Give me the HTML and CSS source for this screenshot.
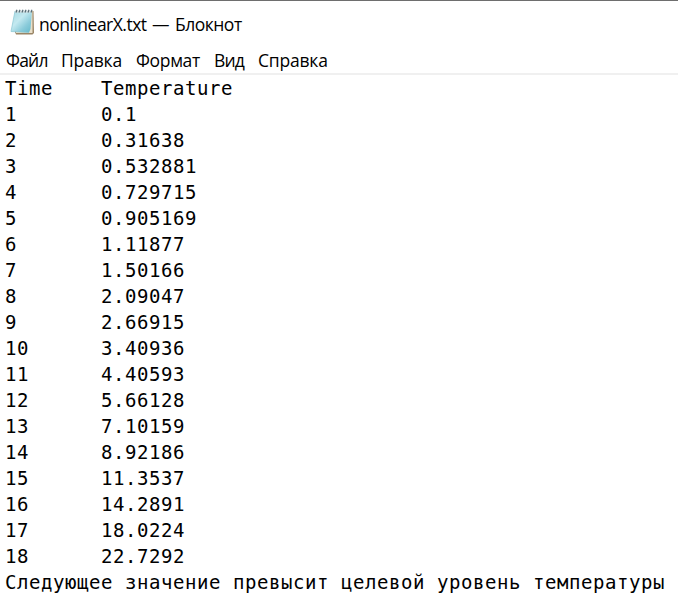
FILE: index.html
```html
<!DOCTYPE html>
<html lang="ru">
<head>
<meta charset="utf-8">
<title>nonlinearX.txt — Блокнот</title>
<link rel="stylesheet" href="styles.css">
</head>
<body>
<div class="window">
<header class="titlebar">
<svg class="icon" width="25" height="26" viewBox="0 0 25 26" aria-hidden="true">
<defs><linearGradient id="paper" x1="0" y1="0" x2="1" y2="1"><stop offset="0" stop-color="#a5d8e2"/><stop offset=".4" stop-color="#c3e9f0"/><stop offset=".7" stop-color="#8acbda"/><stop offset="1" stop-color="#62b8ca"/></linearGradient></defs>
<path d="M6 2H23.500L24 24L22.500 25.500H6L5 23Z" fill="#9a8566"/>
<path d="M6 2H22.500V24H6Z" fill="#e9dfc9"/>
<path d="M5 2H22L20.500 20L19 23.500L1 22.500Z" fill="url(#paper)"/>
<path d="M5 2L1 22.500L19 23.500" fill="none" stroke="#88c5d2" stroke-width=".7"/>
<path d="M5 2.500H21.500" stroke="#cfd9db" stroke-width="2"/>
<path d="M6 3.500L7 .8M9 3.500L10 .8M12 3.500L13 .8M15 3.500L16 .8M18 3.500L19 .8M21 3.500L22 .8" stroke="#526973" stroke-width="1.100"/>
</svg>
<span class="title"><span class="name">nonlinearX.txt </span><span class="dash">— </span>Блокнот</span>
</header>
<nav class="menu"><span class="file">Файл</span><span class="edit">Правка</span><span class="format">Формат</span><span class="view">Вид</span><span class="help">Справка</span></nav>
<pre class="text">Time	Temperature
1	0.1
2	0.31638
3	0.532881
4	0.729715
5	0.905169
6	1.11877
7	1.50166
8	2.09047
9	2.66915
10	3.40936
11	4.40593
12	5.66128
13	7.10159
14	8.92186
15	11.3537
16	14.2891
17	18.0224
18	22.7292
Следующее значение превысит целевой уровень температуры</pre>
</div>
</body>
</html>
```
FILE: styles.css
```css
body { margin: 0; background: #fff; color: #000; }
.window { box-sizing: border-box; height: 603px; border-top: 1px solid #6e6e6e; overflow: hidden; }
.titlebar { display: flex; height: 46px; padding-left: 10px; align-items: flex-start; }
.icon { margin-top: 8px; flex: none; }
.title { display: grid; grid-template-columns: 113px 23px auto; margin-left: 4px; font: 17.5px/46px "Open Sans", sans-serif; letter-spacing: -0.5px; white-space: nowrap; }
.dash { letter-spacing: 0; }
.menu { display: grid; grid-template-columns: 55px 75px 78px 44px auto; box-sizing: border-box; height: 28px; padding-left: 6px; border-bottom: 2px solid #f0f0f0; font: 17.5px/27px "Open Sans", sans-serif; white-space: nowrap; }
.file { letter-spacing: -0.8px; }
.edit { letter-spacing: -0.15px; }
.format { letter-spacing: -0.35px; }
.view { letter-spacing: -0.9px; }
.help { letter-spacing: -0.2px; }
.text { margin: 0; padding-left: 5px; font: 19px/26px "DejaVu Sans Mono", monospace; letter-spacing: 0.561px; tab-size: 96px; }
```
